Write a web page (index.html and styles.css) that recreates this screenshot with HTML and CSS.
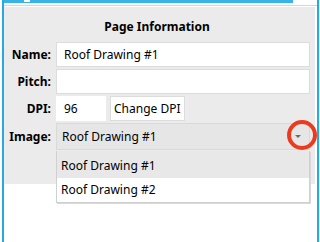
FILE: index.html
```html
<!DOCTYPE html>
<html lang="en">
<head>
  <meta charset="UTF-8" />
  <title>Page Information</title>
  <link rel="stylesheet" href="styles.css">
</head>
<body>

<div class="frame">
  <div class="topbar"><span class="notch"></span></div>
  <div class="rule"></div>

  <section class="panel">
    <h1 class="panel-title">Page Information</h1>

    <div class="form">
      <label class="field-label" for="name">Name:</label>
      <div class="field"><input class="text-input" id="name" type="text" value="Roof Drawing #1" /></div>

      <label class="field-label" for="pitch">Pitch:</label>
      <div class="field"><input class="text-input" id="pitch" type="text" value="" /></div>

      <label class="field-label" for="dpi">DPI:</label>
      <div class="field dpi-row">
        <input class="text-input dpi-input" id="dpi" type="text" value="96" />
        <button class="btn" type="button">Change DPI</button>
      </div>

      <label class="field-label" for="image">Image:</label>
      <div class="field combo-wrap">
        <div class="combo" id="image">
          <span class="combo-value">Roof Drawing #1</span>
          <span class="combo-arrow"></span>
        </div>
        <span class="callout"></span>
        <ul class="dropdown">
          <li class="dropdown-item selected">Roof Drawing #1</li>
          <li class="dropdown-item">Roof Drawing #2</li>
        </ul>
      </div>
    </div>
  </section>
</div>

</body>
</html>
```

FILE: styles.css
```css
body {
  margin: 0;
  background-color: #fff;
  font-family: 'Noto Sans', 'Open Sans', sans-serif;
  font-size: 12px;
  color: #000;
}
.frame {
  height: 242px;
  margin: 0 1px 0 2px;
  border-left: 2px solid #2aa8e0;
  border-right: 2px solid #2aa8e0;
  box-sizing: border-box;
}
.topbar {
  height: 3px;
  width: 289px;
  background-color: #36b4e8;
  position: relative;
}
.notch {
  position: absolute;
  left: 20px;
  top: 0;
  width: 6px;
  height: 2px;
  background-color: #fff;
}
.rule {
  height: 1px;
  margin-top: 2px;
  background-color: #d6d6d6;
}
.panel {
  margin: 1px 2px 0 0;
  height: 177px;
  background-color: #ebebeb;
  box-sizing: border-box;
  padding: 10px 5px 0 0;
}
.panel-title {
  margin: 0;
  font-size: 12px;
  font-weight: bold;
  line-height: 20px;
  text-align: center;
}
.form {
  margin-top: 5px;
  display: grid;
  grid-template-columns: 47px 1fr;
  column-gap: 5px;
  row-gap: 2px;
}
.field-label {
  font-weight: bold;
  text-align: right;
  align-self: center;
}
.field {
  display: flex;
  gap: 4px;
}
.text-input {
  height: 25px;
  width: 100%;
  box-sizing: border-box;
  border: 1px solid #dcdcdc;
  background-color: #fff;
  padding: 0 7px;
  font-family: inherit;
  font-size: 12px;
  color: #000;
  outline: none;
}
.dpi-input {
  width: 50px;
  border-color: #fff;
}
.btn {
  height: 25px;
  padding: 0 3px;
  border: 1px solid #dcdcdc;
  background-color: #fff;
  font-family: inherit;
  font-size: 12px;
  color: #000;
}
.combo-wrap {
  position: relative;
}
.combo {
  height: 27px;
  width: 100%;
  box-sizing: border-box;
  border: 1px solid #d9d9d9;
  background-color: #e6e6e6;
  display: flex;
  align-items: center;
  justify-content: space-between;
  padding: 0 5px 0 5px;
}
.combo-arrow {
  width: 0;
  height: 0;
  margin-right: 3px;
  border-left: 3px solid transparent;
  border-right: 3px solid transparent;
  border-top: 3px solid #6b6b6b;
}
.callout {
  position: absolute;
  right: -7px;
  top: -3px;
  width: 22px;
  height: 22px;
  border: 4px solid #ec3a1f;
  border-radius: 50%;
}
.dropdown {
  position: absolute;
  top: 100%;
  left: 0;
  right: 0;
  margin: 1px 0 0 0;
  padding: 0;
  list-style: none;
  background-color: #fff;
  border: 1px solid #d0d0d0;
  border-top: none;
  box-shadow: 1px 1px 0 #d8d8d8;
}
.dropdown-item {
  height: 24px;
  line-height: 24px;
  padding-left: 4px;
}
.dropdown-item.selected {
  padding-top: 3px;
  background-color: #e8e8e8;
}
```
